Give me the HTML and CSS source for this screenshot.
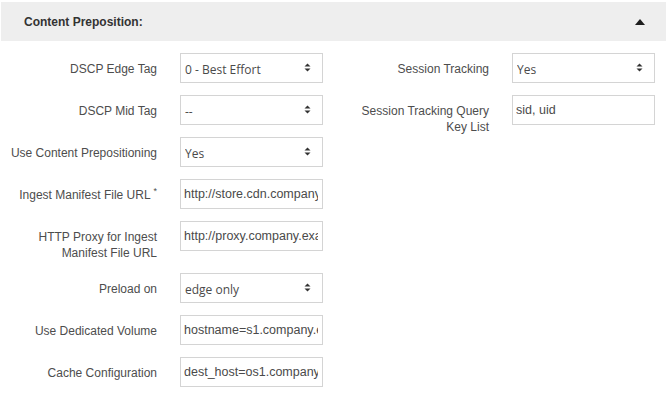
FILE: index.html
```html
<!DOCTYPE html>
<html lang="en">
<head>
    <meta charset="UTF-8">
    <meta name="viewport" content="width=device-width, initial-scale=1.0">
    <title>Content Preposition</title>
    <link rel="stylesheet" href="styles.css">
</head>
<body>
    <div class="panel">
        <div class="panel-head">
            <h3>Content Preposition:</h3>
            <svg class="caret" width="10" height="7" viewBox="0 0 10 7"><polygon points="0,7 5,1 10,7" fill="#1d1d1d"/></svg>
        </div>

        <div class="panel-body">
            <div class="col">
                <div class="row">
                    <label>DSCP Edge Tag</label>
                    <div class="select-wrap">
                        <select><option>0 - Best Effort</option></select>
                        <svg class="updown" width="7" height="9" viewBox="0 0 7 9"><polygon points="0.5,3.5 3.5,0.5 6.5,3.5" fill="#333"/><polygon points="0.5,5.5 3.5,8.5 6.5,5.5" fill="#333"/></svg>
                    </div>
                </div>
                <div class="row">
                    <label>DSCP Mid Tag</label>
                    <div class="select-wrap">
                        <select><option>--</option></select>
                        <svg class="updown" width="7" height="9" viewBox="0 0 7 9"><polygon points="0.5,3.5 3.5,0.5 6.5,3.5" fill="#333"/><polygon points="0.5,5.5 3.5,8.5 6.5,5.5" fill="#333"/></svg>
                    </div>
                </div>
                <div class="row">
                    <label>Use Content Prepositioning</label>
                    <div class="select-wrap">
                        <select><option>Yes</option></select>
                        <svg class="updown" width="7" height="9" viewBox="0 0 7 9"><polygon points="0.5,3.5 3.5,0.5 6.5,3.5" fill="#333"/><polygon points="0.5,5.5 3.5,8.5 6.5,5.5" fill="#333"/></svg>
                    </div>
                </div>
                <div class="row">
                    <label>Ingest Manifest File URL <sup>*</sup></label>
                    <input type="text" value="http://store.cdn.company.example.com/manifest">
                </div>
                <div class="row">
                    <label>HTTP Proxy for Ingest Manifest File URL</label>
                    <input type="text" value="http://proxy.company.example.com:8080">
                </div>
                <div class="row">
                    <label>Preload on</label>
                    <div class="select-wrap">
                        <select><option>edge only</option></select>
                        <svg class="updown" width="7" height="9" viewBox="0 0 7 9"><polygon points="0.5,3.5 3.5,0.5 6.5,3.5" fill="#333"/><polygon points="0.5,5.5 3.5,8.5 6.5,5.5" fill="#333"/></svg>
                    </div>
                </div>
                <div class="row">
                    <label>Use Dedicated Volume</label>
                    <input type="text" value="hostname=s1.company.example.com">
                </div>
                <div class="row">
                    <label>Cache Configuration</label>
                    <input type="text" value="dest_host=os1.company.example.com">
                </div>
            </div>

            <div class="col">
                <div class="row">
                    <label>Session Tracking</label>
                    <div class="select-wrap">
                        <select><option>Yes</option></select>
                        <svg class="updown" width="7" height="9" viewBox="0 0 7 9"><polygon points="0.5,3.5 3.5,0.5 6.5,3.5" fill="#333"/><polygon points="0.5,5.5 3.5,8.5 6.5,5.5" fill="#333"/></svg>
                    </div>
                </div>
                <div class="row">
                    <label>Session Tracking Query Key List</label>
                    <input type="text" value="sid, uid">
                </div>
            </div>
        </div>
    </div>
</body>
</html>
```

FILE: styles.css
```css
body {
    margin: 2px 3px 0 1px;
    font-family: "Liberation Sans", Arial, sans-serif;
    font-size: 12px;
    color: #4a4a4a;
    background: #fff;
}
.panel-head {
    display: flex;
    align-items: center;
    justify-content: space-between;
    height: 39px;
    padding: 0 21px 0 23px;
    background-color: #eeeeee;
}
.panel-head h3 {
    margin: 0;
    font-size: 12px;
    font-weight: bold;
    color: #333;
}
.caret {
    display: block;
}
.panel-body {
    display: flex;
    gap: 16px;
    padding: 12px 0 0 6px;
}
.row {
    display: grid;
    grid-template-columns: 150px 143px;
    column-gap: 23px;
    margin-bottom: 12px;
}
.row label {
    padding: 8px 0 0;
    line-height: 16px;
    text-align: right;
    color: #4d4d4d;
}
.row label sup {
    font-size: 9px;
    line-height: 0;
}
.row input,
.row select {
    box-sizing: border-box;
    width: 143px;
    height: 30px;
    margin: 0;
    padding: 0 4px 0 3px;
    border: 1px solid #d4d4d4;
    border-radius: 0;
    background: #fff;
    color: #4a4a4a;
    outline: none;
}
.row input {
    font-family: "Liberation Sans", Arial, sans-serif;
    font-size: 12.5px;
}
.row select {
    -webkit-appearance: none;
    appearance: none;
    font-family: "Open Sans", sans-serif;
    font-size: 12px;
    padding-top: 2px;
    padding-left: 4px;
}
.select-wrap {
    position: relative;
    width: 143px;
    height: 30px;
}
.updown {
    position: absolute;
    right: 12px;
    top: 10px;
}
```
